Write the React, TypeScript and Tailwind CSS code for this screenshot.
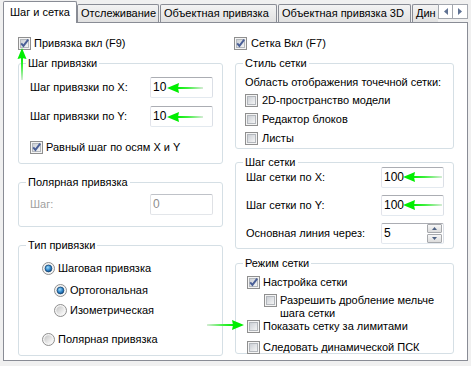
import React from "react";

const font = "font-['Liberation_Sans',Arial,sans-serif]";

function CheckBox({ checked }: { checked?: boolean }) {
  return (
    <svg width="13" height="13" viewBox="0 0 13 13" className="block shrink-0">
      <defs>
        <linearGradient id="cbIn" x1="0" y1="0" x2="1" y2="1">
          <stop offset="0" stopColor="#c9cdd3" />
          <stop offset="1" stopColor="#f7f7f7" />
        </linearGradient>
      </defs>
      <rect x="0.5" y="0.5" width="12" height="12" fill="#f4f4f4" stroke="#8f8f8f" />
      <rect x="2.5" y="2.5" width="8" height="8" fill="url(#cbIn)" stroke="#b3b7bc" />
      {checked && (
        <path d="M3.2 6.3 L5.4 8.9 L10.2 2.6" fill="none" stroke="#4a5f97" strokeWidth="1.9" />
      )}
    </svg>
  );
}

function Radio({ checked }: { checked?: boolean }) {
  return (
    <svg width="13" height="13" viewBox="0 0 13 13" className="block shrink-0">
      <defs>
        <linearGradient id="rIn" x1="0" y1="0" x2="1" y2="1">
          <stop offset="0" stopColor="#c4c4c4" />
          <stop offset="1" stopColor="#ffffff" />
        </linearGradient>
        <radialGradient id="rDot" cx="0.4" cy="0.35" r="0.75">
          <stop offset="0" stopColor="#9ddcfb" />
          <stop offset="0.55" stopColor="#2c82c9" />
          <stop offset="1" stopColor="#0d3a68" />
        </radialGradient>
      </defs>
      <circle cx="6.5" cy="6.5" r="6" fill="#f4f4f4" stroke="#8f8f8f" />
      <circle cx="6.5" cy="6.5" r="4.2" fill="url(#rIn)" />
      {checked && <circle cx="6.5" cy="6.5" r="3.4" fill="url(#rDot)" stroke="#1b4a77" strokeWidth="0.8" />}
    </svg>
  );
}

function TextBox({ value, disabled, spin }: { value: string; disabled?: boolean; spin?: boolean }) {
  return (
    <div
      className={
        disabled
          ? "flex h-[21px] w-[63px] shrink-0 items-center rounded-[2px] border border-[#bfc2c8] border-b-[#e3e6ea] border-l-[#dfe1e5] border-r-[#dfe1e5] bg-white pl-[2px] text-[#8d8d8d]"
          : "flex h-[21px] w-[63px] shrink-0 items-center rounded-[2px] border border-[#abadb3] border-b-[#e3e9ef] border-l-[#e2e3ea] border-r-[#dbdfe6] bg-white pl-[2px] text-black"
      }
    >
      <span className="flex-1 text-[12px]">{value}</span>
      {spin && (
        <div className="mr-[1px] flex flex-col gap-[1px]">
          <div className="flex h-[9px] w-[15px] items-center justify-center rounded-[1px] border border-[#a7a9ad] bg-linear-to-b from-[#f6f6f6] to-[#dcdcdc]">
            <svg width="5" height="3" viewBox="0 0 5 3"><path d="M0 3 L2.5 0 L5 3Z" fill="#4e6284" /></svg>
          </div>
          <div className="flex h-[9px] w-[15px] items-center justify-center rounded-[1px] border border-[#a7a9ad] bg-linear-to-b from-[#f6f6f6] to-[#dcdcdc]">
            <svg width="5" height="3" viewBox="0 0 5 3"><path d="M0 0 L2.5 3 L5 0Z" fill="#4e6284" /></svg>
          </div>
        </div>
      )}
    </div>
  );
}

function Group({ title, className, children }: { title: string; className: string; children: React.ReactNode }) {
  return (
    <fieldset className={"m-0 min-w-0 rounded-[3px] border border-[#d5dfe5] p-0 " + className}>
      <legend className="ml-[7px] px-[2px] leading-[13px]">{title}</legend>
      {children}
    </fieldset>
  );
}

function Arrows() {
  const left = (tip: number, y: number, tail: number, id: string) => (
    <g key={id}>
      <defs>
        <linearGradient id={id} x1={tail} y1={y} x2={tip + 10} y2={y} gradientUnits="userSpaceOnUse">
          <stop offset="0" stopColor="#d6ecd6" />
          <stop offset="0.6" stopColor="#3df03d" />
          <stop offset="1" stopColor="#00ee00" />
        </linearGradient>
      </defs>
      <rect x={tip + 10} y={y - 1} width={tail - tip - 10} height="2" fill={`url(#${id})`} />
      <path d={`M${tip} ${y} L${tip + 12} ${y - 5} L${tip + 11} ${y} L${tip + 12} ${y + 5} Z`} fill="#00ee00" />
    </g>
  );
  const right = (tip: number, y: number, tail: number, id: string) => (
    <g key={id}>
      <defs>
        <linearGradient id={id} x1={tail} y1={y} x2={tip - 10} y2={y} gradientUnits="userSpaceOnUse">
          <stop offset="0" stopColor="#d6ecd6" />
          <stop offset="0.6" stopColor="#3df03d" />
          <stop offset="1" stopColor="#00ee00" />
        </linearGradient>
      </defs>
      <rect x={tail} y={y - 1} width={tip - 10 - tail} height="2" fill={`url(#${id})`} />
      <path d={`M${tip} ${y} L${tip - 12} ${y - 5} L${tip - 11} ${y} L${tip - 12} ${y + 5} Z`} fill="#00ee00" />
    </g>
  );
  return (
    <svg className="pointer-events-none absolute left-0 top-0" width="471" height="366">
      <defs>
        <linearGradient id="gv" x1="22" y1="80" x2="22" y2="57" gradientUnits="userSpaceOnUse">
          <stop offset="0" stopColor="#d6ecd6" />
          <stop offset="0.6" stopColor="#3df03d" />
          <stop offset="1" stopColor="#00ee00" />
        </linearGradient>
      </defs>
      <rect x="21" y="57" width="2" height="23" fill="url(#gv)" />
      <path d="M22 48 L17.5 59 L22 58 L26.5 59 Z" fill="#00ee00" />
      {left(167, 88, 203, "ga1")}
      {left(167, 117, 203, "ga2")}
      {left(403, 177, 442, "ga3")}
      {left(403, 205, 442, "ga4")}
      {right(244, 325, 207, "ga5")}
    </svg>
  );
}

function Tab({ label, className }: { label: string; className: string }) {
  return (
    <div
      className={
        "h-[18px] overflow-hidden whitespace-nowrap rounded-t-[2px] border border-b-0 border-[#898c95] bg-linear-to-b from-[#f3f3f3] to-[#e1e1e1] pl-[3px] pt-[2px] " +
        className
      }
    >
      {label}
    </div>
  );
}

export default function App() {
  return (
    <div className={`relative h-[366px] w-[471px] overflow-hidden bg-[#f0f0f0] text-[11px] leading-[13px] text-black ${font}`}>
      {/* tab strip */}
      <div className="flex h-[22px] w-[471px] items-end pl-[3px] pr-[4px]">
        <div className="relative z-10 -mb-px h-[22px] w-[74px] shrink-0 whitespace-nowrap rounded-t-[2px] border border-b-0 border-[#898c95] bg-white pl-[6px] pt-[4px]">
          Шаг и сетка
        </div>
        <Tab label="Отслеживание" className="w-[82px] shrink-0" />
        <Tab label="Объектная привязка" className="ml-[1px] w-[117px] shrink-0" />
        <Tab label="Объектная привязка 3D" className="ml-[1px] w-[133px] shrink-0" />
        <Tab label="Дин" className="ml-[1px] w-[26px] shrink-0 rounded-tr-none border-r-0" />
        <div className="mb-[3px] ml-auto flex h-[15px] w-[30px] shrink-0">
          <div className="flex h-[15px] w-[15px] items-center justify-center border border-[#a3a7ae] bg-white">
            <svg width="4" height="7" viewBox="0 0 4 7"><path d="M4 0 L0 3.5 L4 7Z" fill="#5f7293" /></svg>
          </div>
          <div className="flex h-[15px] w-[15px] items-center justify-center border border-l-0 border-[#a3a7ae] bg-white">
            <svg width="4" height="7" viewBox="0 0 4 7"><path d="M0 0 L4 3.5 L0 7Z" fill="#5f7293" /></svg>
          </div>
        </div>
      </div>

      {/* page */}
      <div className="mx-[3px] flex h-[339px] w-[465px] border border-[#898c95] bg-white">
        {/* left column */}
        <div className="ml-[14px] flex w-[205px] flex-col">
          <label className="mt-[14px] flex h-[13px] items-center gap-[3px]">
            <CheckBox checked />
            Привязка вкл (F9)
          </label>

          <Group title="Шаг привязки" className="mt-[7px] h-[107px]">
            <div className="flex flex-col pl-[11px] pr-[9px] pt-[7px]">
              <div className="flex items-center justify-between">
                <span>Шаг привязки по X:</span>
                <TextBox value="10" />
              </div>
              <div className="mt-[8px] flex items-center justify-between">
                <span>Шаг привязки по Y:</span>
                <TextBox value="10" />
              </div>
              <label className="mt-[14px] flex h-[13px] items-center gap-[3px]">
                <CheckBox checked />
                Равный шаг по осям X и Y
              </label>
            </div>
          </Group>

          <Group title="Полярная привязка" className="mt-[12px] h-[51px]">
            <div className="flex items-center justify-between pl-[11px] pr-[9px] pt-[5px]">
              <span className="text-[#a0a0a0]">Шаг:</span>
              <TextBox value="0" disabled />
            </div>
          </Group>

          <Group title="Тип привязки" className="mt-[12px] h-[117px]">
            <div className="flex flex-col pl-[23px] pt-[10px]">
              <label className="flex h-[13px] items-center gap-[3px]">
                <Radio checked />
                Шаговая привязка
              </label>
              <label className="ml-[12px] mt-[9px] flex h-[13px] items-center gap-[3px]">
                <Radio checked />
                Ортогональная
              </label>
              <label className="ml-[12px] mt-[7px] flex h-[13px] items-center gap-[3px]">
                <Radio />
                Изометрическая
              </label>
              <label className="mt-[16px] flex h-[13px] items-center gap-[3px]">
                <Radio />
                Полярная привязка
              </label>
            </div>
          </Group>
        </div>

        {/* right column */}
        <div className="ml-[12px] flex w-[219px] flex-col">
          <label className="-ml-[1px] mt-[14px] flex h-[13px] items-center gap-[4px]">
            <CheckBox checked />
            Сетка Вкл (F7)
          </label>

          <Group title="Стиль сетки" className="mt-[7px] h-[92px]">
            <div className="flex flex-col pl-[9px] pt-[6px]">
              <span>Область отображения точечной сетки:</span>
              <label className="mt-[5px] flex h-[13px] items-center gap-[4px]">
                <CheckBox />
                2D-пространство модели
              </label>
              <label className="mt-[6px] flex h-[13px] items-center gap-[4px]">
                <CheckBox />
                Редактор блоков
              </label>
              <label className="mt-[6px] flex h-[13px] items-center gap-[4px]">
                <CheckBox />
                Листы
              </label>
            </div>
          </Group>

          <Group title="Шаг сетки" className="mt-[7px] h-[93px]">
            <div className="-mt-[2px] flex flex-col gap-[7px] pl-[10px] pr-[9px]">
              <div className="flex items-center justify-between">
                <span>Шаг сетки по X:</span>
                <TextBox value="100" />
              </div>
              <div className="flex items-center justify-between">
                <span>Шаг сетки по Y:</span>
                <TextBox value="100" />
              </div>
              <div className="flex items-center justify-between">
                <span>Основная линия через:</span>
                <TextBox value="5" spin />
              </div>
            </div>
          </Group>

          <Group title="Режим сетки" className="mt-[8px] h-[97px]">
            <div className="flex flex-col pl-[11px] pt-[6px]">
              <label className="flex h-[13px] items-center gap-[3px]">
                <CheckBox checked />
                Настройка сетки
              </label>
              <label className="ml-[17px] mt-[5px] flex items-start gap-[3px]">
                <CheckBox />
                <span>
                  Разрешить дробление мельче
                  <br />
                  шага сетки
                </span>
              </label>
              <label className="flex h-[13px] items-center gap-[3px]">
                <CheckBox />
                Показать сетку за лимитами
              </label>
              <label className="mt-[8px] flex h-[13px] items-center gap-[3px]">
                <CheckBox />
                Следовать динамической ПСК
              </label>
            </div>
          </Group>
        </div>
      </div>

      <Arrows />
    </div>
  );
}
